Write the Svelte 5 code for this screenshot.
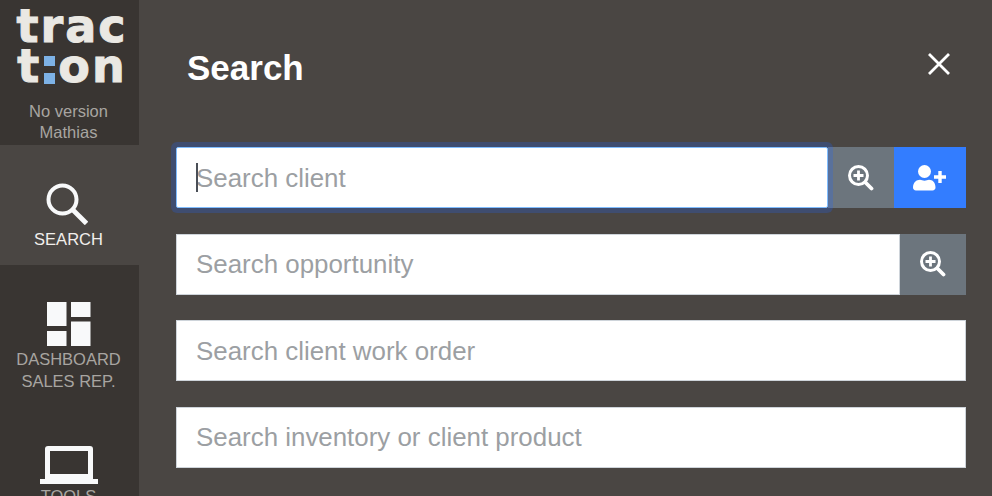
<script>
	const fields = [
		{ placeholder: 'Search client', focus: true, search: true, add: true },
		{ placeholder: 'Search opportunity', search: true },
		{ placeholder: 'Search client work order' },
		{ placeholder: 'Search inventory or client product' }
	];
</script>

{#snippet zoomIcon()}
	<svg width="26" height="26" viewBox="0 0 26 26" fill="none" stroke="#fff">
		<circle cx="10.500" cy="10.500" r="9" stroke-width="3" />
		<path d="M10.500 5.500v10M5.500 10.500h10" stroke-width="2.800" />
		<path d="M17.500 17.500l6 6" stroke-width="3.800" stroke-linecap="round" />
	</svg>
{/snippet}

<div class="page">
	<aside class="sidebar">
		<div class="brand">
			<div class="logo">
				<div class="logo-line">trac</div>
				<div class="logo-line">t<span class="colon"><i></i><i></i></span>on</div>
			</div>
			<div class="version">No version</div>
			<div class="version">Mathias</div>
		</div>
		<nav>
			<div class="nav-item active">
				<svg class="search-icon" width="42" height="42" viewBox="0 0 42 42" fill="none" stroke="#f8f9fa">
					<circle cx="16.500" cy="16.500" r="14" stroke-width="4" />
					<path d="M26.500 26.500l14 14" stroke-width="4.800" />
				</svg>
				<span>SEARCH</span>
			</div>
			<div class="nav-item dash">
				<svg width="44" height="44" viewBox="0 0 44 44" fill="#f8f9fa">
					<rect x="0" y="0" width="19.500" height="24" />
					<rect x="24" y="0" width="19.500" height="15" />
					<rect x="0" y="29" width="19.500" height="15" />
					<rect x="24" y="19.500" width="19.500" height="24.500" />
				</svg>
				<span>DASHBOARD<br />SALES REP.</span>
			</div>
			<div class="nav-item tools">
				<svg width="58" height="38" viewBox="0 0 58 38" fill="#f8f9fa">
					<path fill-rule="evenodd" d="M5 3a3 3 0 0 1 3-3h42a3 3 0 0 1 3 3v30H5zM10 5v23h38V5z" />
					<path d="M0 33h58v5H0z" />
				</svg>
				<span>TOOLS</span>
			</div>
		</nav>
	</aside>

	<main class="content">
		<header class="head">
			<h1>Search</h1>
			<button class="close" aria-label="Close">
				<svg width="24" height="24" viewBox="0 0 24 24" stroke="#fff" stroke-width="2.800">
					<path d="M2 2l20 20M22 2L2 22" />
				</svg>
			</button>
		</header>

		<div class="fields">
			{#each fields as field}
				<div class="group">
					<div class="input" class:focus={field.focus}>
						{#if field.focus}<span class="caret"></span>{/if}
						<span class="placeholder">{field.placeholder}</span>
					</div>
					{#if field.search}
						<div class="btn grey">{@render zoomIcon()}</div>
					{/if}
					{#if field.add}
						<div class="btn blue">
							<svg width="34" height="26" viewBox="0 0 34 26" fill="#fff">
								<circle cx="11.500" cy="6.500" r="6.500" />
								<path d="M0 22.500C0 17.500 3.500 14.800 7 14.800c1.500 0 2.700.9 4.500.9s3-.9 4.500-.9c3.500 0 6.500 2.700 6.500 7.700 0 1.700-1.200 2.900-3 2.900H3c-1.800 0-3-1.200-3-2.900z" />
								<path d="M27 6v12M21 12h12" stroke="#fff" stroke-width="3.400" />
							</svg>
						</div>
					{/if}
				</div>
			{/each}
		</div>
	</main>
</div>

<style>
	:global(body) {
		margin: 0;
		font-family: "Liberation Sans", Arial, sans-serif;
	}

	.page {
		display: flex;
		width: 992px;
		height: 496px;
		overflow: hidden;
		background: #4a4643;
	}

	.sidebar {
		flex: 0 0 139px;
		display: flex;
		flex-direction: column;
		background: #393532;
	}

	.brand {
		height: 145px;
		box-sizing: border-box;
		padding-right: 2px;
		text-align: center;
		flex: none;
	}

	.logo {
		height: 91px;
		padding: 6px 0 0 7px;
		box-sizing: border-box;
		font-family: "DejaVu Sans", sans-serif;
		font-weight: 700;
		font-size: 46px;
		line-height: 40px;
		color: #eae8e3;
		letter-spacing: 2px;
		-webkit-text-stroke: 1px #eae8e3;
		margin-bottom: 10px;
	}

	.logo-line {
		height: 40px;
		display: flex;
		justify-content: center;
		align-items: center;
	}

	.colon {
		display: inline-flex;
		flex-direction: column;
		gap: 7px;
		margin: 7px 3px 0 3px;
	}

	.colon i {
		display: block;
		width: 11px;
		height: 10.500px;
		background: #7db2e6;
	}

	.version {
		font-size: 16.500px;
		line-height: 21px;
		color: #a8a5a1;
	}

	.nav-item {
		box-sizing: border-box;
		padding: 37px 2px 17px 0;
		display: flex;
		flex-direction: column;
		align-items: center;
		font-size: 16.500px;
		line-height: 22px;
		color: #a8a5a1;
		text-align: center;
	}

	.nav-item svg {
		flex: none;
	}

	.nav-item .search-icon {
		margin-right: 3px;
	}

	.nav-item.active {
		height: 120px;
		padding: 38px 2px 15px 0;
		gap: 3px;
		background: #4a4643;
		color: #f1efec;
	}

	.dash {
		gap: 2px;
	}

	.tools {
		gap: 1px;
	}

	.content {
		flex: 1;
		padding: 0 26px 0 37px;
		min-width: 0;
	}

	.head {
		height: 147px;
		display: flex;
		justify-content: space-between;
		align-items: flex-start;
		padding-left: 11px;
	}

	h1 {
		margin: 45px 0 0;
		font-size: 35px;
		line-height: 46px;
		font-weight: 700;
		color: #fff;
	}

	.close {
		margin: 52px 15px 0 0;
		padding: 0;
		border: none;
		background: none;
		width: 24px;
		height: 24px;
	}

	.fields {
		display: flex;
		flex-direction: column;
		gap: 25.500px;
	}

	.group {
		display: flex;
		height: 61px;
	}

	.input {
		flex: 1;
		position: relative;
		display: flex;
		align-items: center;
		padding: 1px 0 0 19px;
		background: #fff;
		border: 1px solid #ced4da;
		box-sizing: border-box;
		font-size: 25.900px;
		color: #9c9fa3;
	}

	.input.focus {
		border-color: #80bdff;
		box-shadow: 0 0 0 5px rgba(30, 100, 255, 0.24);
		z-index: 1;
		border-radius: 2px;
	}

	.caret {
		position: absolute;
		left: 19px;
		top: 15px;
		width: 2px;
		height: 29px;
		background: #4a4f57;
	}

	.btn {
		display: flex;
		align-items: center;
		justify-content: center;
	}

	.grey {
		width: 66px;
		background: #6c757d;
	}

	.blue {
		width: 72px;
		background: #337dff;
	}
</style>
